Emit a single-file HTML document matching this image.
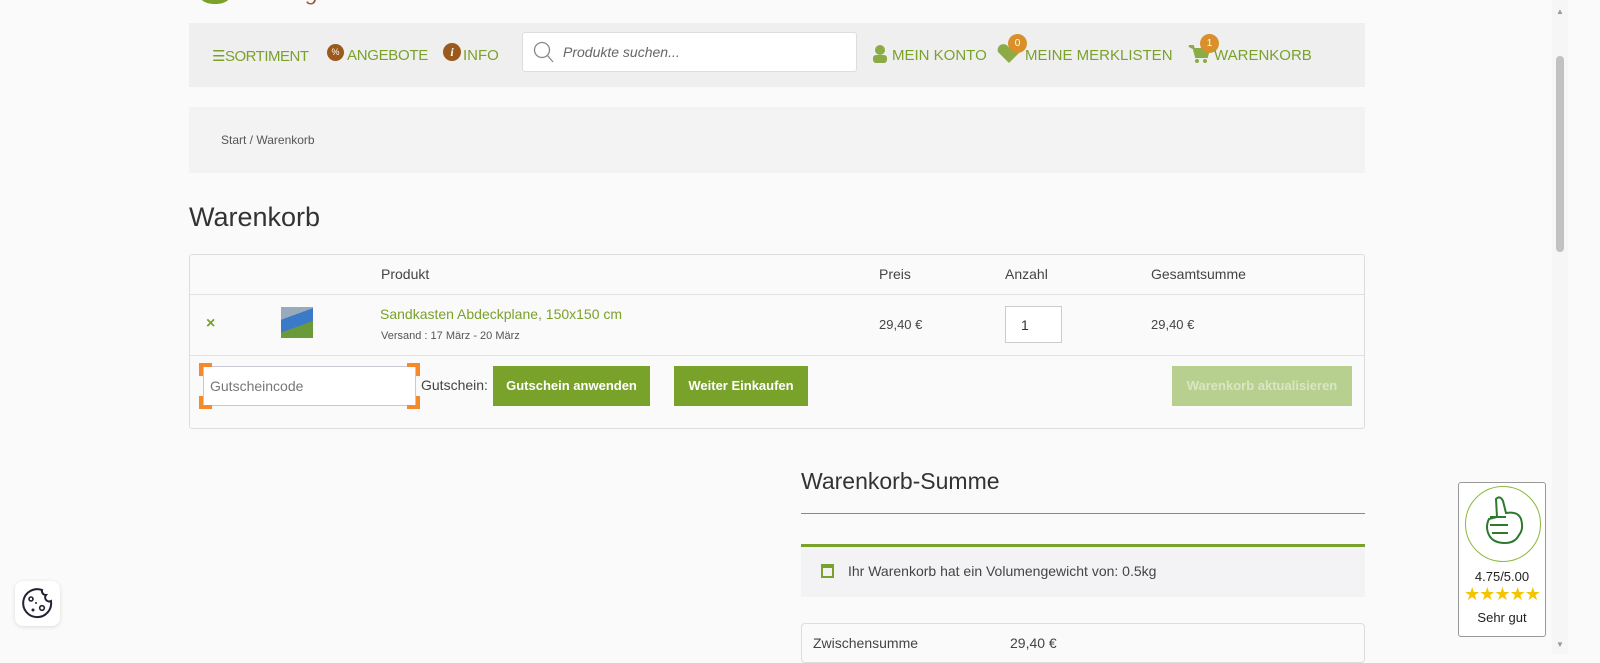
<!DOCTYPE html>
<html><head><meta charset="utf-8"><style>
*{box-sizing:border-box;margin:0;padding:0}
body{width:1600px;height:654px;overflow:hidden;background:#fafafa;font-family:"Liberation Sans",sans-serif;color:#333;position:relative}
.abs{position:absolute}
.nav{left:189px;top:23px;width:1176px;height:64px;background:#efefef}
.nav a{position:absolute;top:24px;font-size:15px;color:#7aa12a;text-decoration:none;white-space:nowrap}
.search{left:522px;top:32px;width:335px;height:40px;background:#fff;border:1px solid #ddd;border-radius:3px}
.badge{position:absolute;width:19px;height:19px;border-radius:50%;background:#d9902a;color:#fff;font-size:10px;text-align:center;line-height:19px}
.green{color:#7aa12a}
.btn{position:absolute;background:#78a22a;color:#fff;font-size:13px;font-weight:bold;text-align:center;line-height:40px;height:40px}
</style></head><body>
<div class="abs" style="left:195px;top:-14px;width:40px;height:18px;border-radius:0 0 20px 20px;background:#7aa12a"></div>
<div class="abs" style="left:250px;top:-20px;font-size:22px;color:#9a5b34;font-style:italic">Pfanzgemeinde</div>

<div class="abs nav">
<a style="left:23px;letter-spacing:-0.5px">☰SORTIMENT</a>
<span class="abs" style="left:138px;top:21px;width:17px;height:17px;border-radius:50%;background:#9a5a1e;color:#fff;font-size:9px;text-align:center;line-height:17px">%</span>
<a style="left:158px;letter-spacing:-0.3px">ANGEBOTE</a>
<span class="abs" style="left:254px;top:20px;width:18px;height:18px;border-radius:50%;background:#9a5a1e;color:#fff;font-size:12px;font-weight:bold;font-style:italic;text-align:center;line-height:18px;font-family:'Liberation Serif',serif">i</span>
<a style="left:274px">INFO</a>
<svg class="abs" style="left:683px;top:21px" width="18" height="20"><circle cx="8" cy="6" r="5" fill="#8aab45"/><rect x="1" y="11" width="14" height="8" rx="3" fill="#8aab45"/></svg>
<a style="left:703px">MEIN KONTO</a>
<svg class="abs" style="left:808px;top:20px" width="24" height="22"><path d="M12 20 L1 9 A5 5 0 0 1 12 5 A5 5 0 0 1 23 9 Z" fill="#8aab45"/></svg>
<div class="badge" style="left:819px;top:11px">0</div>
<a style="left:836px">MEINE MERKLISTEN</a>
<svg class="abs" style="left:999px;top:21px" width="22" height="20"><path d="M1 2h4l3 11h11l2-8H7z" fill="#8aab45" stroke="#8aab45" stroke-width="2"/><circle cx="9" cy="17" r="2" fill="#8aab45"/><circle cx="17" cy="17" r="2" fill="#8aab45"/></svg>
<div class="badge" style="left:1011px;top:11px">1</div>
<a style="left:1025px">WARENKORB</a>
</div>
<div class="abs search"><svg class="abs" style="left:10px;top:8px" width="22" height="24"><circle cx="9" cy="9" r="7.5" fill="none" stroke="#888" stroke-width="1.3"/><line x1="14.5" y1="14.5" x2="20" y2="21" stroke="#888" stroke-width="1.3"/></svg><span class="abs" style="left:40px;top:11px;font-size:14px;font-style:italic;color:#666">Produkte suchen...</span></div>

<div class="abs" style="left:189px;top:107px;width:1176px;height:66px;background:#f3f3f3"></div>
<div class="abs" style="left:221px;top:133px;font-size:12px;color:#555">Start / Warenkorb</div>
<div class="abs" style="left:189px;top:202px;font-size:27px;color:#333">Warenkorb</div>

<div class="abs" style="left:189px;top:254px;width:1176px;height:175px;border:1px solid #ddd;border-radius:3px;background:#fafafa"></div>
<div class="abs" style="left:190px;top:294px;width:1174px;height:1px;background:#e2e2e2"></div>
<div class="abs" style="left:190px;top:355px;width:1174px;height:1px;background:#e2e2e2"></div>
<div class="abs" style="top:266px;left:381px;font-size:14px;color:#444">Produkt</div>
<div class="abs" style="top:266px;left:879px;font-size:14px;color:#444">Preis</div>
<div class="abs" style="top:266px;left:1005px;font-size:14px;color:#444">Anzahl</div>
<div class="abs" style="top:266px;left:1151px;font-size:14px;color:#444">Gesamtsumme</div>
<div class="abs green" style="top:315px;left:206px;font-size:16px;font-weight:bold">×</div>
<div class="abs" style="top:307px;left:281px;width:32px;height:31px;background:linear-gradient(160deg,#9ab 0 30%,#3a7ac8 30% 60%,#6a9a3a 60%)"></div>
<div class="abs green" style="top:306px;left:380px;font-size:14px">Sandkasten Abdeckplane, 150x150 cm</div>
<div class="abs" style="top:330px;left:381px;font-size:11px;color:#555">Versand : 17 März - 20 März</div>
<div class="abs" style="top:317px;left:879px;font-size:13px;color:#444">29,40 €</div>
<div class="abs" style="top:306px;left:1005px;width:57px;height:37px;background:#fff;border:1px solid #ccc;font-size:14px;padding:10px 0 0 15px">1</div>
<div class="abs" style="top:317px;left:1151px;font-size:13px;color:#444">29,40 €</div>

<div class="abs" style="top:366px;left:203px;width:213px;height:40px;background:#fff;border:1px solid #c8c8d8;font-size:14px;color:#777;padding:11px 0 0 6px">Gutscheincode</div>
<div class="abs" style="top:363px;left:199px;width:13px;height:13px;border-left:4px solid #f58a2a;border-top:4px solid #f58a2a"></div>
<div class="abs" style="top:363px;left:407px;width:13px;height:13px;border-right:4px solid #f58a2a;border-top:4px solid #f58a2a"></div>
<div class="abs" style="top:396px;left:199px;width:13px;height:13px;border-left:4px solid #f58a2a;border-bottom:4px solid #f58a2a"></div>
<div class="abs" style="top:396px;left:407px;width:13px;height:13px;border-right:4px solid #f58a2a;border-bottom:4px solid #f58a2a"></div>
<div class="abs" style="top:377px;left:421px;font-size:14px;color:#444">Gutschein:</div>
<div class="btn" style="top:366px;left:493px;width:157px">Gutschein anwenden</div>
<div class="btn" style="top:366px;left:674px;width:134px">Weiter Einkaufen</div>
<div class="btn" style="top:366px;left:1172px;width:180px;background:#b7d08f;color:#d9e6c4">Warenkorb aktualisieren</div>

<div class="abs" style="top:468px;left:801px;font-size:23px;color:#333">Warenkorb-Summe</div>
<div class="abs" style="top:513px;left:801px;width:564px;height:1px;background:#7aa12a"></div>
<div class="abs" style="top:544px;left:801px;width:564px;height:53px;background:#f3f3f5;border-top:3px solid #78a22a"></div>
<div class="abs" style="top:564px;left:821px;width:13px;height:14px;border:2px solid #7aa12a;border-top-width:4px"></div>
<div class="abs" style="top:563px;left:848px;font-size:14px;color:#444">Ihr Warenkorb hat ein Volumengewicht von: 0.5kg</div>
<div class="abs" style="top:623px;left:801px;width:564px;height:40px;border:1px solid #ddd;border-radius:4px"></div>
<div class="abs" style="top:635px;left:813px;font-size:14px;color:#444">Zwischensumme</div>
<div class="abs" style="top:635px;left:1010px;font-size:14px;color:#444">29,40 €</div>

<div class="abs" style="top:581px;left:15px;width:45px;height:45px;background:#fff;border-radius:8px;box-shadow:0 1px 4px rgba(0,0,0,.12)"><svg width="45" height="45"><path d="M36 20 A14 14 0 1 1 27 9 A4 4 0 0 0 31 14 A4 4 0 0 0 36 20Z" fill="none" stroke="#223" stroke-width="2"/><circle cx="16" cy="18" r="2" fill="none" stroke="#223" stroke-width="1.6"/><circle cx="27" cy="27" r="2.3" fill="none" stroke="#223" stroke-width="1.6"/><circle cx="18" cy="29" r="1.5" fill="#223"/><circle cx="21" cy="22" r="1" fill="#223"/></svg></div>

<div class="abs" style="top:482px;left:1458px;width:88px;height:155px;background:#fff;border:1px solid #999;border-radius:3px">
<div class="abs" style="top:3px;left:6px;width:76px;height:76px;border:1.5px solid #8ab83a;border-radius:50%"><svg width="73" height="73"><path d="M30 12 q4-4 7 2 l3 12 q12-2 15 6 q3 10-2 16 q-4 8-14 8 q-12 0-16-8 q-4-8 0-16 l8-2 z M24 30 l16 0 M24 38 l18 0 M26 46 l16 0" fill="none" stroke="#2d7a2d" stroke-width="2"/></svg></div>
<div class="abs" style="top:86px;left:0;width:86px;text-align:center;font-size:13px;color:#222">4.75/5.00</div>
<div class="abs" style="top:101px;left:0;width:86px;text-align:center;font-size:18px;color:#f5c400;letter-spacing:-1px">★★★★★</div>
<div class="abs" style="top:127px;left:0;width:86px;text-align:center;font-size:13px;color:#222">Sehr gut</div>
</div>

<div class="abs" style="top:0;left:1552px;width:16px;height:654px;background:#f6f6f6"></div>
<div class="abs" style="top:56px;left:1556px;width:8px;height:196px;background:#c1c1c1;border-radius:4px"></div>
<div class="abs" style="top:7px;left:1556px;font-size:8px;color:#999">▲</div>
<div class="abs" style="top:640px;left:1556px;font-size:8px;color:#999">▼</div>
</body></html>
